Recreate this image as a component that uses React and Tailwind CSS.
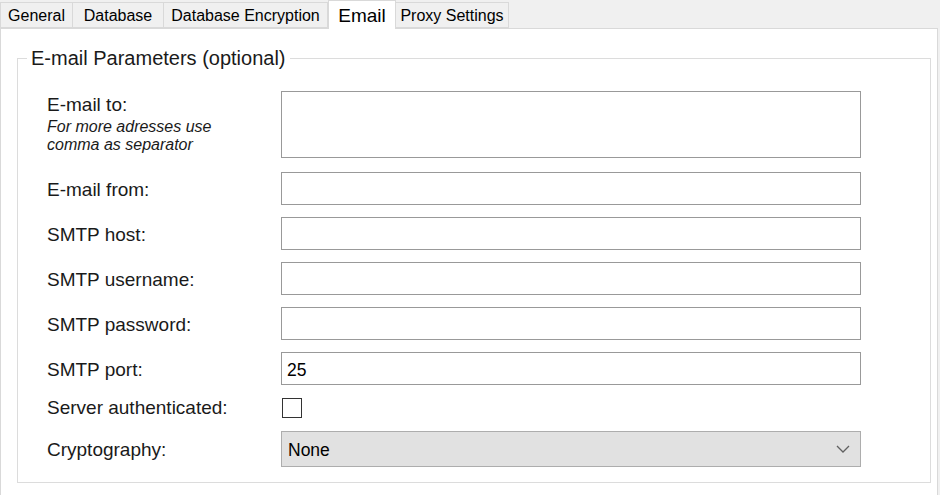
const tabs = [
  { label: 'General', w: 'w-[73px]' },
  { label: 'Database', w: 'w-[92px]' },
  { label: 'Database Encryption', w: 'w-[165px]' },
  { label: 'Email', w: 'w-[68px]', active: true },
  { label: 'Proxy Settings', w: 'w-[114px]' },
]

const textFields = ['E-mail from:', 'SMTP host:', 'SMTP username:', 'SMTP password:']

function Field({ label, value }) {
  return (
    <div className="flex items-center h-[33px]">
      <div className="w-[234px] pt-[3px] text-[19px] text-[#1a1a1a]">{label}</div>
      <div className="w-[580px] h-[33px] border border-[#999999] bg-white flex items-center pt-[3px] px-[5px] text-[17.5px] text-black">
        {value}
      </div>
    </div>
  )
}

export default function App() {
  return (
    <div className="w-[940px] h-[495px] bg-[#f0f0f0] overflow-hidden font-['Liberation_Sans',Arial,sans-serif]">
      <div className="flex items-end h-[28px] relative z-10">
        {tabs.map((t) =>
          t.active ? (
            <div
              key={t.label}
              className={`${t.w} h-[29px] -mb-px bg-white border border-b-0 border-[#d9d9d9] flex justify-center pt-[1px] text-[19px] text-black`}
            >
              {t.label}
            </div>
          ) : (
            <div
              key={t.label}
              className={`${t.w} h-[26px] bg-[#f0f0f0] border border-[#d9d9d9] -ml-px first:ml-0 flex items-center justify-center pt-[2px] text-[16px] text-black`}
            >
              {t.label}
            </div>
          )
        )}
      </div>

      <div className="w-[938px] h-[480px] bg-white border border-[#d9d9d9] pt-[29px]">
        <div className="relative ml-[16px] w-[914px] h-[425px] border border-[#dcdcdc] pt-[32px] pl-[29px]">
          <div className="absolute -top-[12px] left-[9px] bg-white px-[4px] text-[20px] leading-[22px] text-[#1a1a1a]">
            E-mail Parameters (optional)
          </div>

          <div className="flex flex-col gap-[12px]">
            <div className="flex items-start mb-[2px]">
              <div className="w-[234px] pt-[3px]">
                <div className="text-[19px] leading-[22px] text-[#1a1a1a]">E-mail to:</div>
                <div className="italic text-[16px] leading-[18px] text-[#1a1a1a] mt-[2px]">
                  For more adresses use
                  <br />
                  comma as separator
                </div>
              </div>
              <div className="w-[580px] h-[67px] border border-[#999999] bg-white" />
            </div>

            {textFields.map((f) => (
              <Field key={f} label={f} />
            ))}
            <Field label="SMTP port:" value="25" />

            <div className="flex items-center h-[21px]">
              <div className="w-[234px] pt-[2px] text-[19px] text-[#1a1a1a]">Server authenticated:</div>
              <div className="w-[20px] h-[20px] border border-[#333333] bg-white ml-[1px]" />
            </div>

            <div className="flex items-center h-[36px] mt-[1px]">
              <div className="w-[234px] pt-[3px] text-[19px] text-[#1a1a1a]">Cryptography:</div>
              <div className="w-[580px] h-[36px] border border-[#adadad] bg-[#e1e1e1] flex items-center justify-between pt-[3px] pl-[6px] pr-[10px] text-[17.5px] text-black">
                <span>None</span>
                <svg width="14" height="8" viewBox="0 0 14 8" fill="none" className="-mt-[3px]">
                  <path d="M1 1l6 6 6-6" stroke="#606060" strokeWidth="1.3" />
                </svg>
              </div>
            </div>
          </div>
        </div>
      </div>
    </div>
  )
}
